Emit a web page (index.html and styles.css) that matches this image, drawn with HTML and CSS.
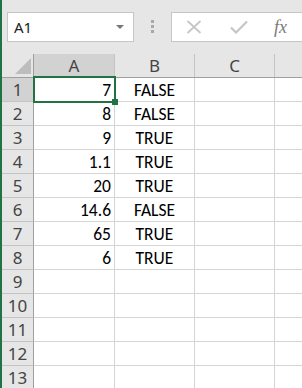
FILE: index.html
```html
<!DOCTYPE html>
<html lang="en">
<head>
  <meta charset="UTF-8" />
  <title>Book1</title>
  <link rel="stylesheet" href="styles.css">
</head>
<body>
  <div class="toolbar">
    <div class="namebox">
      <span class="ref">A1</span>
      <span class="caret"></span>
    </div>
    <div class="grip"><i></i><i></i><i></i></div>
    <div class="formula">
      <svg class="icon" width="16" height="14" viewBox="0 0 16 14">
        <path d="M1.5 1 L14.5 13 M14.5 1 L1.5 13" stroke="#c6c6c6" stroke-width="1.8" fill="none"/>
      </svg>
      <svg class="icon" width="18" height="14" viewBox="0 0 18 14">
        <path d="M1 7.5 L6 12.5 L17 1.5" stroke="#c6c6c6" stroke-width="2.2" fill="none"/>
      </svg>
      <span class="fx">fx</span>
    </div>
  </div>

  <div class="sheet">
    <div class="row head">
      <div class="rh corner"><span class="tri"></span></div>
      <div class="ch a active">A</div>
      <div class="ch">B</div>
      <div class="ch">C</div>
      <div class="ch"></div>
    </div>
    <div class="row">
      <div class="rh active">1</div>
      <div class="cell a num">7<span class="selection"><span class="handle"></span></span></div>
      <div class="cell mid">FALSE</div><div class="cell"></div><div class="cell"></div>
    </div>
    <div class="row">
      <div class="rh">2</div>
      <div class="cell a num">8</div>
      <div class="cell mid">FALSE</div><div class="cell"></div><div class="cell"></div>
    </div>
    <div class="row">
      <div class="rh">3</div>
      <div class="cell a num">9</div>
      <div class="cell mid">TRUE</div><div class="cell"></div><div class="cell"></div>
    </div>
    <div class="row">
      <div class="rh">4</div>
      <div class="cell a num">1.1</div>
      <div class="cell mid">TRUE</div><div class="cell"></div><div class="cell"></div>
    </div>
    <div class="row">
      <div class="rh">5</div>
      <div class="cell a num">20</div>
      <div class="cell mid">TRUE</div><div class="cell"></div><div class="cell"></div>
    </div>
    <div class="row">
      <div class="rh">6</div>
      <div class="cell a num">14.6</div>
      <div class="cell mid">FALSE</div><div class="cell"></div><div class="cell"></div>
    </div>
    <div class="row">
      <div class="rh">7</div>
      <div class="cell a num">65</div>
      <div class="cell mid">TRUE</div><div class="cell"></div><div class="cell"></div>
    </div>
    <div class="row">
      <div class="rh">8</div>
      <div class="cell a num">6</div>
      <div class="cell mid">TRUE</div><div class="cell"></div><div class="cell"></div>
    </div>
    <div class="row">
      <div class="rh">9</div>
      <div class="cell a"></div><div class="cell"></div><div class="cell"></div><div class="cell"></div>
    </div>
    <div class="row">
      <div class="rh">10</div>
      <div class="cell a"></div><div class="cell"></div><div class="cell"></div><div class="cell"></div>
    </div>
    <div class="row">
      <div class="rh">11</div>
      <div class="cell a"></div><div class="cell"></div><div class="cell"></div><div class="cell"></div>
    </div>
    <div class="row">
      <div class="rh">12</div>
      <div class="cell a"></div><div class="cell"></div><div class="cell"></div><div class="cell"></div>
    </div>
    <div class="row">
      <div class="rh">13</div>
      <div class="cell a"></div><div class="cell"></div><div class="cell"></div><div class="cell"></div>
    </div>
  </div>
</body>
</html>
```

FILE: styles.css
```css
* {
  box-sizing: border-box;
}
body {
  margin: 0;
  width: 302px;
  height: 388px;
  overflow: hidden;
  background: #fff;
  border-left: 2px solid #217346;
  font-family: 'Segoe UI', 'Noto Sans', sans-serif;
}
.toolbar {
  display: flex;
  align-items: flex-start;
  height: 54px;
  padding: 12px 0 0 5px;
  background: #e6e6e6;
}
.namebox {
  display: flex;
  align-items: center;
  justify-content: space-between;
  width: 127px;
  height: 30px;
  padding: 0 9px 0 6px;
  background: #fff;
  border: 1px solid #c6c6c6;
}
.ref {
  font-size: 15px;
  color: #222;
}
.caret {
  width: 0;
  height: 0;
  border-left: 4px solid transparent;
  border-right: 4px solid transparent;
  border-top: 4px solid #777;
}
.grip {
  display: flex;
  flex-direction: column;
  gap: 2px;
  margin: 8px 17px 0 17px;
}
.grip i {
  width: 3px;
  height: 3px;
  background: #a8a8a8;
}
.formula {
  display: flex;
  align-items: center;
  flex: 1;
  height: 30px;
  padding-left: 14px;
  background: #fff;
  border: 1px solid #c6c6c6;
  border-right: none;
  overflow: hidden;
}
.icon {
  flex-shrink: 0;
}
.icon + .icon {
  margin-left: 28px;
}
.fx {
  margin-left: 26px;
  font-family: 'Liberation Serif', serif;
  font-style: italic;
  font-size: 18px;
  color: #7a7a7a;
}
.sheet {
  overflow: hidden;
}
.row {
  display: flex;
  height: 24px;
}
.rh,
.ch {
  display: flex;
  align-items: center;
  justify-content: center;
  color: #444;
  background: #e6e6e6;
  font-size: 17px;
}
.rh {
  flex: 0 0 32px;
  border-right: 1px solid #9f9f9f;
  border-bottom: 1px solid #c4c4c4;
}
.head {
  border-bottom: 1px solid #9f9f9f;
}
.head .rh {
  border-bottom: none;
  align-items: flex-end;
  justify-content: flex-end;
  padding: 0 2px 3px 0;
}
.ch {
  flex: 0 0 80px;
  border-right: 1px solid #c4c4c4;
}
.ch.a {
  flex-basis: 81px;
}
.active {
  background: #d2d2d2;
}
.tri {
  width: 0;
  height: 0;
  border-left: 16px solid transparent;
  border-bottom: 16px solid #bdbdbd;
}
.cell {
  position: relative;
  flex: 0 0 80px;
  display: flex;
  align-items: center;
  padding: 1px 3px 0;
  border-right: 1px solid #d4d4d4;
  border-bottom: 1px solid #d4d4d4;
  font-family: 'Carlito', 'Lato', sans-serif;
  font-size: 17.5px;
  color: #000;
}
.cell.a {
  flex-basis: 81px;
}
.num {
  justify-content: flex-end;
}
.mid {
  justify-content: center;
}
.selection {
  position: absolute;
  z-index: 2;
  left: -1px;
  top: -2px;
  right: -2px;
  bottom: -2px;
  border: 2px solid #217346;
}
.handle {
  position: absolute;
  right: -4px;
  bottom: -4px;
  width: 6px;
  height: 6px;
  background: #217346;
}
```
